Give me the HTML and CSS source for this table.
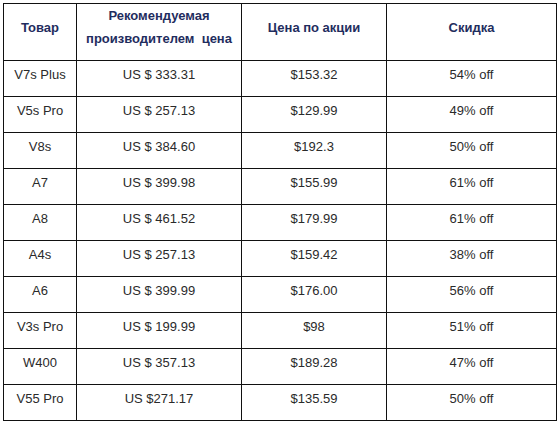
FILE: index.html
```html
<!DOCTYPE html>
<html lang="ru">
<head>
    <meta charset="UTF-8">
    <title>Скидки</title>
    <link rel="stylesheet" href="styles.css">
</head>
<body>
    <table class="prices">
        <colgroup>
            <col class="c-item">
            <col class="c-msrp">
            <col class="c-sale">
            <col class="c-off">
        </colgroup>
        <thead>
            <tr>
                <th>Товар</th>
                <th>Рекомендуемая<br>производителем&nbsp; цена</th>
                <th>Цена по акции</th>
                <th>Скидка</th>
            </tr>
        </thead>
        <tbody>
            <tr><td>V7s Plus</td><td>US $ 333.31</td><td>$153.32</td><td>54% off</td></tr>
            <tr><td>V5s Pro</td><td>US $ 257.13</td><td>$129.99</td><td>49% off</td></tr>
            <tr><td>V8s</td><td>US $ 384.60</td><td>$192.3</td><td>50% off</td></tr>
            <tr><td>A7</td><td>US $ 399.98</td><td>$155.99</td><td>61% off</td></tr>
            <tr><td>A8</td><td>US $ 461.52</td><td>$179.99</td><td>61% off</td></tr>
            <tr><td>A4s</td><td>US $ 257.13</td><td>$159.42</td><td>38% off</td></tr>
            <tr><td>A6</td><td>US $ 399.99</td><td>$176.00</td><td>56% off</td></tr>
            <tr><td>V3s Pro</td><td>US $ 199.99</td><td>$98</td><td>51% off</td></tr>
            <tr><td>W400</td><td>US $ 357.13</td><td>$189.28</td><td>47% off</td></tr>
            <tr><td>V55 Pro</td><td>US $271.17</td><td>$135.59</td><td>50% off</td></tr>
        </tbody>
    </table>
</body>
</html>
```

FILE: styles.css
```css
body{
    margin: 0;
    padding: 3px;
    background-color: #fff;
    font-family: "Liberation Sans", Arial, sans-serif;
}
.prices{
    border-collapse: collapse;
    table-layout: fixed;
    width: 553px;
    font-size: 13px;
    color: #2a2a2a;
}
.c-item{ width: 73px; }
.c-msrp{ width: 165px; }
.c-sale{ width: 145px; }
.c-off{ width: 170px; }
.prices th,
.prices td{
    border: 1px solid #111;
    text-align: center;
    padding: 0;
}
.prices th{
    height: 57px;
    color: #1f2d5e;
    font-weight: bold;
    line-height: 23px;
    vertical-align: middle;
    padding-bottom: 10px;
    box-sizing: border-box;
}
.prices td{
    height: 36px;
    vertical-align: top;
    padding-top: 6px;
    box-sizing: border-box;
}
```
